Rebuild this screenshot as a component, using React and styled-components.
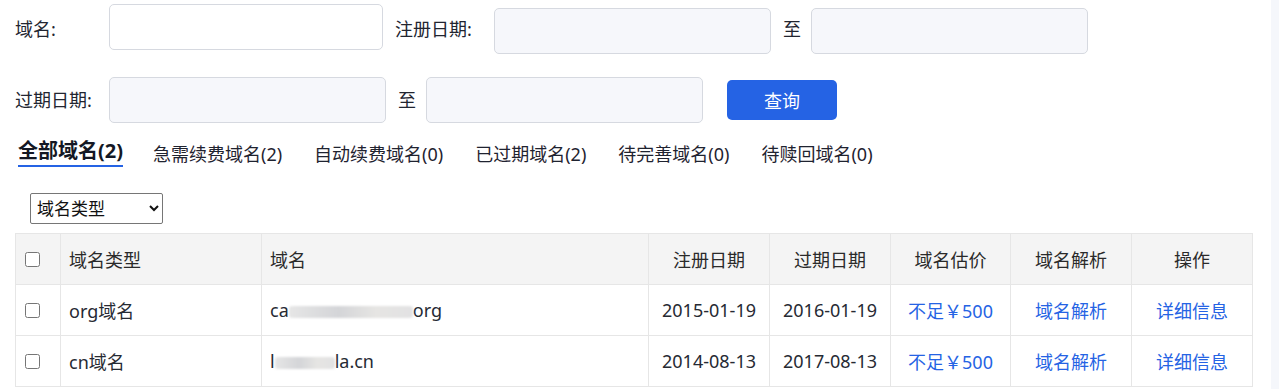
import React from "react";
import styled, { createGlobalStyle } from "styled-components";

const GlobalStyle = createGlobalStyle`
  html, body { margin: 0; padding: 0; background: #fff; }
  body {
    font-family: "Noto Sans", "Noto Sans CJK SC", sans-serif;
    color: #1f2330;
  }
  * { box-sizing: border-box; }
`;

const Page = styled.div`
  display: flex;
  width: 1279px;
  height: 389px;
  overflow: hidden;
`;

const Main = styled.div`
  flex: 1;
  min-width: 0;
`;

const ScrollTrack = styled.div`
  width: 8px;
  background: #f5f7fb;
`;

const FormRow = styled.div`
  display: flex;
  align-items: ${(p) => (p.$top ? "flex-start" : "center")};
  padding-left: 15px;
  margin-top: ${(p) => p.$mt || 0}px;
  height: ${(p) => p.$h}px;
`;

const Label = styled.label`
  width: ${(p) => p.$w}px;
  margin-left: ${(p) => p.$ml || 0}px;
  margin-top: ${(p) => p.$mt || 0}px;
  font-size: 18px;
  line-height: 46px;
  color: #222530;
  white-space: nowrap;
`;

const Field = styled.input`
  width: ${(p) => p.$w}px;
  height: 46px;
  margin-top: ${(p) => p.$mt || 0}px;
  border: 1px solid #d6d9e0;
  border-radius: 5px;
  background: ${(p) => (p.$plain ? "#ffffff" : "#f6f7fb")};
  font-size: 16px;
  padding: 0 10px;
  outline: none;
`;

const QueryButton = styled.button`
  margin-left: 24px;
  width: 110px;
  height: 40px;
  border: none;
  border-radius: 5px;
  background: #2563e4;
  color: #fff;
  font-family: inherit;
  font-size: 18px;
  cursor: pointer;
`;

const Tabs = styled.div`
  display: flex;
  align-items: flex-start;
  gap: 32px;
  padding-left: 18px;
  margin-top: 17px;
`;

const Tab = styled.div`
  white-space: nowrap;
  line-height: 22px;
  font-size: ${(p) => (p.$active ? 20 : 18)}px;
  font-weight: ${(p) => (p.$active ? 700 : 400)};
  color: ${(p) => (p.$active ? "#141824" : "#1f2330")};
  padding-bottom: ${(p) => (p.$active ? 3 : 0)}px;
  border-bottom: ${(p) => (p.$active ? "2px solid #2563e4" : "none")};
  margin-top: ${(p) => (p.$active ? 0 : 3)}px;
  margin-right: ${(p) => (p.$active ? -2 : 0)}px;
`;

const TypeSelect = styled.select`
  display: block;
  margin: 26px 0 0 30px;
  width: 133px;
  height: 31px;
  font-family: inherit;
  font-size: 17px;
  color: #111;
  background: #fff;
  border: 1px solid #767676;
  border-radius: 2px;
  padding: 0 2px;
`;

const Table = styled.table`
  margin: 9px 0 0 15px;
  width: 1237px;
  border-collapse: collapse;
  table-layout: fixed;
  font-size: 18px;
`;

const HeadRow = styled.tr`
  height: 51px;
  background: #f4f4f4;
`;

const BodyRow = styled.tr`
  height: 51px;
  background: #fff;
`;

const Cell = styled.td`
  border: 1px solid #e6e6e6;
  padding: 0 ${(p) => (p.$check ? 0 : 8)}px 0 ${(p) => (p.$check ? 9 : 8)}px;
  text-align: ${(p) => (p.$left ? "left" : "center")};
  vertical-align: middle;
  color: #262a33;
  white-space: nowrap;
  overflow: hidden;
`;

const HeadCell = styled(Cell).attrs({ as: "th" })`
  font-weight: 400;
  color: #2a2a2a;
`;

const Check = styled.input.attrs({ type: "checkbox" })`
  display: block;
  width: 15px;
  height: 15px;
  margin: 0;
`;

const Link = styled.a`
  color: #2563e4;
  text-decoration: none;
  cursor: pointer;
`;

const Blur = styled.span`
  display: inline-block;
  vertical-align: middle;
  width: ${(p) => p.$w}px;
  height: 12px;
  border-radius: 3px;
  background: linear-gradient(90deg, #e6e6e6, #d4d5d8 40%, #e6e5e3 70%, #e2e2e3);
  filter: blur(1px);
`;

const cols = [45, 201, 387, 121, 121, 120, 121, 121];

const rows = [
  {
    type: "org域名",
    domain: (
      <>
        ca<Blur $w={124} />org
      </>
    ),
    reg: "2015-01-19",
    exp: "2016-01-19",
  },
  {
    type: "cn域名",
    domain: (
      <>
        l<Blur $w={60} />la.cn
      </>
    ),
    reg: "2014-08-13",
    exp: "2017-08-13",
  },
];

const tabs = [
  "全部域名(2)",
  "急需续费域名(2)",
  "自动续费域名(0)",
  "已过期域名(2)",
  "待完善域名(0)",
  "待赎回域名(0)",
];

export default function App() {
  return (
    <>
      <GlobalStyle />
      <Page>
        <Main>
          <FormRow $top $h={54}>
            <Label $w={94} $mt={6}>域名:</Label>
            <Field $w={274} $mt={4} $plain />
            <Label $w={99} $ml={12} $mt={6}>注册日期:</Label>
            <Field $w={277} $mt={8} />
            <Label $w={28} $ml={12} $mt={6}>至</Label>
            <Field $w={277} $mt={8} />
          </FormRow>
          <FormRow $mt={23} $h={46}>
            <Label $w={94}>过期日期:</Label>
            <Field $w={277} />
            <Label $w={28} $ml={12}>至</Label>
            <Field $w={277} />
            <QueryButton>查询</QueryButton>
          </FormRow>
          <Tabs>
            {tabs.map((t, i) => (
              <Tab key={t} $active={i === 0}>
                {t}
              </Tab>
            ))}
          </Tabs>
          <TypeSelect defaultValue="">
            <option value="">域名类型</option>
            <option value="org">org域名</option>
            <option value="cn">cn域名</option>
          </TypeSelect>
          <Table>
            <colgroup>
              {cols.map((w, i) => (
                <col key={i} style={{ width: w }} />
              ))}
            </colgroup>
            <thead>
              <HeadRow>
                <HeadCell $check $left>
                  <Check />
                </HeadCell>
                <HeadCell $left>域名类型</HeadCell>
                <HeadCell $left>域名</HeadCell>
                <HeadCell>注册日期</HeadCell>
                <HeadCell>过期日期</HeadCell>
                <HeadCell>域名估价</HeadCell>
                <HeadCell>域名解析</HeadCell>
                <HeadCell>操作</HeadCell>
              </HeadRow>
            </thead>
            <tbody>
              {rows.map((r) => (
                <BodyRow key={r.reg}>
                  <Cell $check $left>
                    <Check />
                  </Cell>
                  <Cell $left>{r.type}</Cell>
                  <Cell $left>{r.domain}</Cell>
                  <Cell>{r.reg}</Cell>
                  <Cell>{r.exp}</Cell>
                  <Cell>
                    <Link>不足￥500</Link>
                  </Cell>
                  <Cell>
                    <Link>域名解析</Link>
                  </Cell>
                  <Cell>
                    <Link>详细信息</Link>
                  </Cell>
                </BodyRow>
              ))}
            </tbody>
          </Table>
        </Main>
        <ScrollTrack />
      </Page>
    </>
  );
}
